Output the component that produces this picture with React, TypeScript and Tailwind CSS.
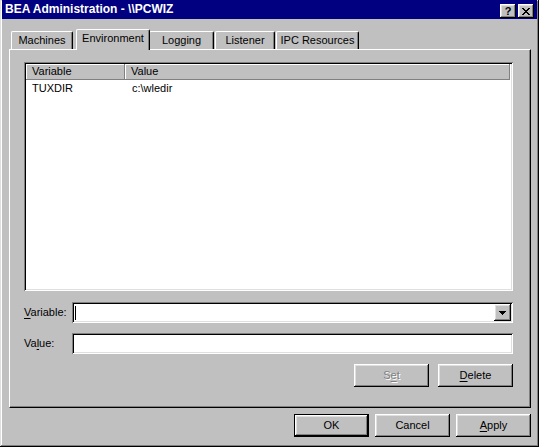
import { ReactElement, ReactNode } from "react";

const raised =
  "shadow-[inset_-1px_-1px_0_#000,inset_1px_1px_0_#fff,inset_-2px_-2px_0_#808080,inset_2px_2px_0_#dfdfdf]";
const sunken =
  "shadow-[inset_1px_1px_0_#808080,inset_-1px_-1px_0_#fff,inset_2px_2px_0_#000,inset_-2px_-2px_0_#dfdfdf]";

const Btn = ({
  children,
  isDefault = false,
  disabled = false,
}: {
  children: ReactNode;
  isDefault?: boolean;
  disabled?: boolean;
}): ReactElement => {
  if (isDefault) {
    return (
      <div className="w-[75px] h-[23px] border border-black">
        <div className={`w-full h-full flex items-center justify-center ${raised}`}>{children}</div>
      </div>
    );
  }
  return (
    <div
      className={`w-[75px] h-[23px] flex items-center justify-center ${raised} ${
        disabled ? "text-[#808080] [text-shadow:1px_1px_0_#fff]" : ""
      }`}
    >
      {children}
    </div>
  );
};

const Tab = ({
  label,
  width,
  selected = false,
  className = "",
}: {
  label: string;
  width: string;
  selected?: boolean;
  className?: string;
}): ReactElement => (
  <div
    className={`${width} ${className} ${
      selected ? "h-[21px] -mb-[1px] z-10 -mx-[2px] px-[2px]" : "h-[18px]"
    } relative bg-[#c0c0c0] border-t border-l border-white border-r border-r-black rounded-tl-[2px] rounded-tr-[2px] shadow-[inset_-1px_0_0_#808080] flex items-start justify-center pt-[2px]`}
  >
    {label}
  </div>
);

export default function App(): ReactElement {
  return (
    <div
      className="w-[539px] h-[447px] bg-[#c0c0c0] text-black text-[11px] leading-[13px] overflow-hidden flex flex-col px-[2px] shadow-[inset_-1px_-1px_0_#000,inset_1px_1px_0_#dfdfdf,inset_-2px_-2px_0_#808080,inset_2px_2px_0_#fff]"
      style={{ fontFamily: '"Liberation Sans", Arial, sans-serif' }}
    >
      {/* Title bar */}
      <div className="h-[19px] bg-[#000080] flex items-start justify-between">
        <span className="pl-[3px] pt-[3px] text-white font-bold text-[12px] leading-[13px]">
          BEA Administration - \\PCWIZ
        </span>
        <div className="flex gap-[2px] pt-[4px] pr-[3px]">
          <div className={`w-[16px] h-[14px] bg-[#c0c0c0] text-black flex items-center justify-center font-bold text-[11px] leading-none ${raised}`}>
            ?
          </div>
          <div className={`w-[16px] h-[14px] bg-[#c0c0c0] flex items-center justify-center ${raised}`}>
            <svg width="8" height="7" viewBox="0 0 8 7" shapeRendering="crispEdges">
              <path d="M0 0h2v1h-2zM6 0h2v1h-2zM1 1h2v1h-2zM5 1h2v1h-2zM2 2h4v1h-4zM3 3h2v1h-2zM2 4h4v1h-4zM1 5h2v1h-2zM5 5h2v1h-2zM0 6h2v1h-2zM6 6h2v1h-2z" fill="#000" />
            </svg>
          </div>
        </div>
      </div>

      {/* Tabs */}
      <div className="mt-[10px] ml-[7px] flex items-end h-[20px] pl-[2px]">
        <Tab label="Machines" width="w-[62px]" />
        <Tab label="Environment" width="w-[74px]" selected className="ml-[3px]" />
        <Tab label="Logging" width="w-[65px]" className="ml-[1px]" />
        <Tab label="Listener" width="w-[60px]" className="ml-[1px]" />
        <Tab label="IPC Resources" width="w-[83px]" className="ml-[1px]" />
      </div>

      {/* Tab panel */}
      <div className="ml-[7px] w-[522px] h-[359px] border-t border-l border-white border-r border-b border-r-black border-b-black shadow-[inset_-1px_-1px_0_#808080] pl-[14px] pt-[12px] flex flex-col">
        {/* List view */}
        <div className={`w-[489px] h-[229px] bg-white p-[2px] ${sunken}`}>
          <div className="flex h-[16px] bg-[#c0c0c0] mr-[1px]">
            <div className="w-[99px] h-full pl-[6px] flex items-center border-r border-b border-[#808080] shadow-[inset_1px_1px_0_#fff]">
              Variable
            </div>
            <div className="flex-1 h-full pl-[6px] flex items-center border-r border-b border-[#808080] shadow-[inset_1px_1px_0_#fff]">
              Value
            </div>
          </div>
          <div className="flex h-[16px] items-center">
            <div className="w-[99px] pl-[6px]">TUXDIR</div>
            <div className="pl-[7px]">c:\wledir</div>
          </div>
        </div>

        {/* Variable */}
        <div className="flex items-center mt-[11px] h-[21px]">
          <span className="w-[48px]">
            <span className="underline underline-offset-2">V</span>ariable:
          </span>
          <div className={`w-[441px] h-[21px] bg-white flex items-center justify-between pl-[3px] pr-[2px] ${sunken}`}>
            <div className="w-px h-[14px] bg-black" />
            <div className={`w-[17px] h-[17px] bg-[#c0c0c0] flex items-center justify-center ${raised}`}>
              <svg width="7" height="4" viewBox="0 0 7 4" shapeRendering="crispEdges">
                <path d="M0 0h7v1h-7zM1 1h5v1h-5zM2 2h3v1h-3zM3 3h1v1h-1z" fill="#000" />
              </svg>
            </div>
          </div>
        </div>

        {/* Value */}
        <div className="flex items-center mt-[10px] h-[21px]">
          <span className="w-[48px]">
            Va<span className="underline underline-offset-2">l</span>ue:
          </span>
          <div className={`w-[441px] h-[21px] bg-white ${sunken}`} />
        </div>

        <div className="flex justify-end gap-[9px] mt-[10px] w-[489px]">
          <Btn disabled>
            S<span className="underline underline-offset-2">e</span>t
          </Btn>
          <Btn>
            <span className="underline underline-offset-2">D</span>elete
          </Btn>
        </div>
      </div>

      {/* Dialog buttons */}
      <div className="flex justify-end gap-[6px] mt-[6px] pr-[6px]">
        <Btn isDefault>OK</Btn>
        <Btn>Cancel</Btn>
        <Btn>
          <span className="underline underline-offset-2">A</span>pply
        </Btn>
      </div>
    </div>
  );
}
